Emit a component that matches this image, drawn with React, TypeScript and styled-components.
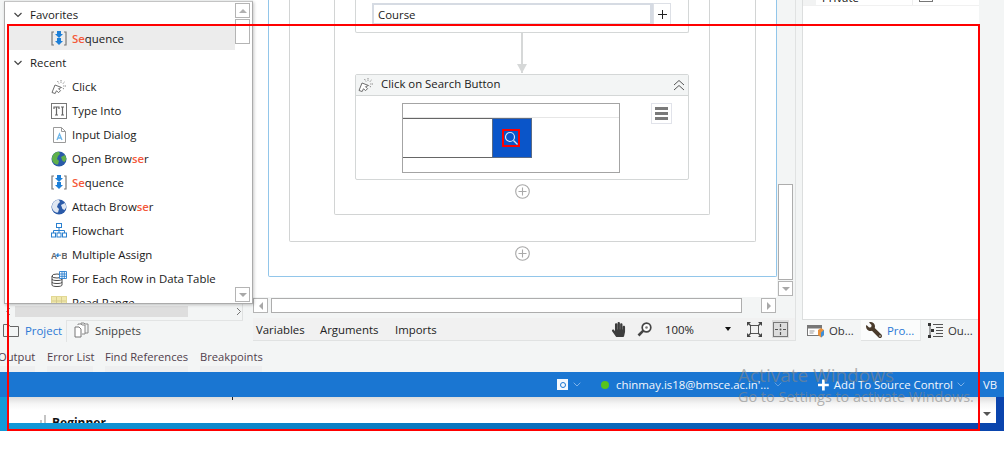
import React from 'react';
import styled, { createGlobalStyle } from 'styled-components';
import { FaHandPaper, FaWrench } from 'react-icons/fa';

const Global = createGlobalStyle`
  html, body { margin: 0; padding: 0; background: #fff; }
  #root { width: 1004px; height: 456px; overflow: hidden; }
  * { box-sizing: border-box; }
`;

const FONT = `"Open Sans", "Noto Sans", sans-serif`;

const Page = styled.div`
  position: relative;
  width: 1004px;
  height: 456px;
  background: #fff;
  overflow: hidden;
  font-family: ${FONT};
  font-size: 11.4px;
  color: #1a1a1a;
`;
const Window = styled.div`
  height: 372px;
  background: #f3f5f5;
  display: flex;
  flex-direction: column;
`;
const Workspace = styled.div`
  height: 341px;
  display: flex;
`;
const LeftColumn = styled.div`
  width: 253px;
  padding-left: 4px;
  display: flex;
  flex-direction: column;
`;
const Popup = styled.div`
  position: relative;
  z-index: 2;
  width: 249px;
  height: 303px;
  margin-top: 1px;
  background: #fff;
  border: 1px solid #ababab;
  border-top-color: #c4c4c4;
  box-shadow: 1px 1px 3px rgba(0, 0, 0, 0.22);
  display: flex;
`;
const TreeList = styled.div`
  width: 230px;
  padding-left: 3px;
  overflow: hidden;
`;
const Row = styled.div<{ $selected?: boolean }>`
  height: 24px;
  display: flex;
  align-items: center;
  background: ${p => (p.$selected ? '#ececec' : 'transparent')};
  white-space: nowrap;
  padding-top: 1px;
`;
const Caret = styled.svg`
  width: 8px;
  height: 6px;
  margin: 0 8px 0 6px;
  flex: none;
`;
const IconSlot = styled.span`
  width: 16px;
  height: 16px;
  margin: 0 5px 0 43px;
  flex: none;
  display: flex;
  align-items: center;
  justify-content: center;
`;
const Hit = styled.b`
  color: #f4593b;
  font-weight: 600;
`;
const ScrollColumn = styled.div`
  width: 16px;
  padding: 1px 0;
  display: flex;
  flex-direction: column;
`;
const ScrollButton = styled.div`
  width: 15px;
  height: 15px;
  flex: none;
  border: 1px solid #b4b4b4;
  background: #fff;
  display: flex;
  align-items: center;
  justify-content: center;
`;
const Tri = styled.span<{ $dir: 'up' | 'down' | 'left' | 'right' }>`
  width: 0;
  height: 0;
  border-style: solid;
  border-color: transparent;
  ${p =>
    p.$dir === 'up'
      ? 'border-width: 0 4px 4px 4px; border-bottom-color: #b0b0b0;'
      : p.$dir === 'down'
      ? 'border-width: 4px 4px 0 4px; border-top-color: #a8a8a8;'
      : p.$dir === 'left'
      ? 'border-width: 4px 4px 4px 0; border-right-color: #a8a8a8;'
      : 'border-width: 4px 0 4px 4px; border-left-color: #a8a8a8;'}
`;
const PopupThumb = styled.div`
  width: 15px;
  height: 25px;
  margin-top: 1px;
  flex: none;
  border: 1px solid #b4b4b4;
`;
const ScrollSpacer = styled.div`
  flex: 1;
`;
const LeftScroll = styled.div`
  width: 239px;
  height: 16px;
  padding: 1px 0 2px 1px;
  border-right: 1px solid #dfe1e1;
  display: flex;
  align-items: center;
  color: #777;
`;
const LeftThumb = styled.div`
  width: 173px;
  height: 11px;
  margin-left: 4px;
  background: #dedede;
`;
const Chev = styled.svg`
  width: 6px;
  height: 9px;
  flex: none;
`;
const Grow = styled.div`
  flex: 1;
`;
const LeftTabs = styled.div`
  height: 21px;
  margin-left: -4px;
  display: flex;
  width: 243px;
  border-top: 1px solid #e2e4e4;
`;
const LeftTab = styled.div<{ $active?: boolean }>`
  display: flex;
  align-items: center;
  gap: 6px;
  height: 21px;
  padding: 0 0 ${p => (p.$active ? 0 : 3)}px ${p => (p.$active ? 3 : 7)}px;
  width: ${p => (p.$active ? '66px' : 'auto')};
  color: ${p => (p.$active ? '#2a78d6' : '#444')};
  background: ${p => (p.$active ? '#f3f5f5' : 'transparent')};
  border-left: ${p => (p.$active ? 'none' : '1px solid #e2e4e4')};
  margin-top: ${p => (p.$active ? -1 : 0)}px;
`;
const Designer = styled.div`
  width: 542px;
  display: flex;
  flex-direction: column;
`;
const DesignerTop = styled.div`
  height: 297px;
  display: flex;
`;
const Canvas = styled.div`
  width: 524px;
  height: 297px;
  background: #fff;
  padding: 0 0 20px 15px;
  display: flex;
  flex-direction: column;
  justify-content: flex-end;
  overflow: hidden;
`;
const Frame = styled.div<{ $w: number; $color: string; $pad: number; $nudge?: number }>`
  width: ${p => p.$w}px;
  flex: none;
  border: 1px solid ${p => p.$color};
  border-top: none;
  border-radius: 0 0 2px 2px;
  padding-bottom: ${p => p.$pad}px;
  margin-right: ${p => p.$nudge ?? 0}px;
  display: flex;
  flex-direction: column;
  align-items: center;
`;
const Card = styled.div`
  width: 334px;
  flex: none;
  background: #fff;
  border: 1px solid #d4d7d7;
  border-radius: 2px;
`;
const CourseCard = styled(Card)`
  border-top: none;
  padding: 20px 0 7px 16px;
  display: flex;
`;
const CourseInput = styled.div`
  width: 281px;
  height: 22px;
  border: 2px solid #d6dbe3;
  border-right-width: 3px;
  padding: 0 4px;
  display: flex;
  align-items: center;
`;
const PlusButton = styled.div`
  width: 18px;
  height: 22px;
  border: 1px solid #dde0e6;
  display: flex;
  align-items: center;
  justify-content: center;
`;
const Connector = styled.div`
  position: relative;
  width: 2px;
  height: 40px;
  flex: none;
  background: #d6d8d8;
  margin-bottom: 1px;
  &::after {
    content: '';
    position: absolute;
    left: -4px;
    bottom: 0;
    border-style: solid;
    border-width: 9px 5px 0 5px;
    border-color: #d6d8d8 transparent transparent transparent;
  }
`;
const CardHeader = styled.div`
  height: 21px;
  background: #f3f5f5;
  border-bottom: 1px solid #d4d7d7;
  display: flex;
  align-items: center;
  padding: 0 3px 0 2px;
  gap: 7px;
`;
const CardTitle = styled.span`
  flex: 1;
  margin-top: -4px;
`;
const CardBody = styled.div`
  padding: 7px 16px 6px 46px;
  display: flex;
  justify-content: space-between;
  align-items: flex-start;
`;
const Shot = styled.div`
  width: 218px;
  height: 70px;
  border: 1px solid #a4a4a4;
  display: flex;
  flex-direction: column;
`;
const ShotTop = styled.div`
  height: 14px;
  border-bottom: 1px solid #e6e6e6;
  flex: none;
`;
const SearchRow = styled.div`
  display: flex;
  height: 40px;
`;
const SearchField = styled.div`
  width: 89px;
  border-top: 1px solid #666;
  border-bottom: 1px solid #666;
  background: #fff;
`;
const SearchButton = styled.div`
  width: 40px;
  background: #0a55c9;
  border: 1px solid #5b6b85;
  display: flex;
  align-items: center;
  justify-content: center;
  padding-right: 3px;
`;
const Target = styled.div`
  width: 18px;
  height: 18px;
  border: 2px solid #ff0000;
  display: flex;
  align-items: center;
  justify-content: center;
`;
const MenuButton = styled.div`
  width: 21px;
  height: 21px;
  border: 1px solid #e1e3ea;
  display: flex;
  flex-direction: column;
  align-items: center;
  justify-content: center;
  gap: 2px;
  & > i {
    display: block;
    width: 13px;
    height: 3px;
    background: #7a7a7a;
  }
`;
const AddCircle = styled.svg<{ $mt: number }>`
  width: 15px;
  height: 15px;
  flex: none;
  margin-top: ${p => p.$mt}px;
`;
const VGutter = styled.div`
  width: 18px;
  height: 297px;
  padding: 184px 0 0 1px;
  display: flex;
  flex-direction: column;
  gap: 1px;
`;
const VThumb = styled.div`
  width: 15px;
  height: 96px;
  background: #fff;
  border: 1px solid #adadad;
`;
const HRow = styled.div`
  height: 21px;
  padding: 1px 0 5px 0;
  display: flex;
  align-items: stretch;
`;
const HThumb = styled.div`
  width: 471px;
  margin-left: 3px;
  background: #fff;
  border: 1px solid #adadad;
`;
const HSpace = styled.div`
  width: 19px;
`;
const DesignerBar = styled.div`
  height: 23px;
  background: #f1f1f1;
  border-bottom: 1px solid #e0e2e2;
  display: flex;
  align-items: center;
  padding-left: 3px;
`;
const BarLink = styled.span<{ $w: number }>`
  width: ${p => p.$w}px;
  color: #222;
`;
const BarIcon = styled.span<{ $w: number; $gray?: boolean; $ml?: number }>`
  width: ${p => p.$w}px;
  height: 18px;
  margin-left: ${p => p.$ml ?? 0}px;
  display: flex;
  align-items: center;
  justify-content: center;
  background: ${p => (p.$gray ? '#dcdcdc' : 'transparent')};
  flex: none;
`;
const ZoomText = styled.span`
  width: 60px;
  margin-left: 12px;
  color: #222;
`;
const ZoomArrow = styled.span`
  width: 0;
  height: 0;
  border-style: solid;
  border-color: #111 transparent transparent transparent;
  border-width: 4px 3.5px 0;
`;
const RightColumn = styled.div`
  width: 185px;
  padding-left: 6px;
  border-left: 1px solid #e0e2e2;
  display: flex;
  flex-direction: column;
`;
const PropsPanel = styled.div`
  height: 320px;
  width: 177px;
  flex: none;
  background: #fff;
  border-left: 1px solid #dcdede;
  border-bottom: 1px solid #dcdede;
  overflow: hidden;
`;
const PropRow = styled.div`
  height: 6px;
  display: flex;
  border-bottom: 1px solid #f1f1f1;
  align-items: flex-end;
`;
const PropGutter = styled.div`
  width: 13px;
  height: 6px;
  background: #f2f3f3;
`;
const PropName = styled.div`
  width: 97px;
  height: 5px;
  border-right: 1px solid #eee;
  position: relative;
  overflow: hidden;
  & > span {
    position: absolute;
    bottom: 0;
    left: 6px;
    color: #111;
  }
`;
const PropCheck = styled.div`
  width: 14px;
  height: 2px;
  margin-left: 6px;
  align-self: flex-start;
  border: 1px solid #777;
  border-top: none;
`;
const RightTabs = styled.div`
  height: 21px;
  display: flex;
  align-items: center;
`;
const RightTab = styled.div<{ $active?: boolean; $w: number; $pl: number }>`
  width: ${p => p.$w}px;
  height: 21px;
  display: flex;
  align-items: center;
  gap: 5px;
  padding-left: ${p => p.$pl}px;
  background: ${p => (p.$active ? '#fbfcfc' : 'transparent')};
  border-bottom: ${p => (p.$active ? '1px solid #e0e2e2' : 'none')};
  border-right: ${p => (p.$active ? '1px solid #e6e8e8' : 'none')};
  color: ${p => (p.$active ? '#2a78d6' : '#333')};
`;
const MirroredWrench = styled(FaWrench)`
  transform: scaleX(-1);
  flex: none;
`;
const OutputTabs = styled.div`
  height: 31px;
  margin-left: -2px;
  padding-top: 9px;
  display: flex;
  gap: 12px;
  align-items: stretch;
`;
const OutputTab = styled.div<{ $w: number }>`
  width: ${p => p.$w}px;
  white-space: nowrap;
  color: #50404c;
  height: 22px;
  font-size: 11.2px;
  line-height: 14px;
  background: linear-gradient(#f3f5f5 0 16px, #eeeff0 16px);
`;
const StatusBar = styled.div`
  height: 25px;
  background: #1a76d2;
  color: #f2f7fd;
  display: flex;
  align-items: center;
  justify-content: flex-end;
`;
const StatusSquare = styled.span`
  width: 11px;
  height: 11px;
  background: #f4f8fd;
  display: flex;
  align-items: center;
  justify-content: center;
  & > i {
    width: 6px;
    height: 6px;
    border: 1.5px solid #1a76d2;
    border-radius: 50%;
  }
`;
const Dot = styled.span`
  width: 8px;
  height: 8px;
  border-radius: 50%;
  background: #58c41c;
  margin: 0 7px 0 20px;
`;
const StatusChevron = styled.svg<{ $ml: number }>`
  width: 8px;
  height: 5px;
  margin-left: ${p => p.$ml}px;
  flex: none;
`;
const Email = styled.span`
  width: 156px;
  white-space: nowrap;
`;
const SourceButton = styled.span`
  display: flex;
  align-items: center;
  gap: 5px;
  margin-left: 36px;
  width: 135px;
  white-space: nowrap;
`;
const UserInitials = styled.span`
  width: 21px;
  margin-left: 18px;
`;
const Desktop = styled.div`
  height: 34px;
  padding: 0 8px 8px;
  background: linear-gradient(90deg, #129ad8 0, #0b7cc0 40%, #0a44ad 100%);
`;
const BackWindow = styled.div`
  height: 26px;
  background: linear-gradient(#dcdcdc 0, #f6f6f6 7px, #fff 13px);
  position: relative;
  display: flex;
  align-items: flex-end;
  overflow: hidden;
  padding-left: 28px;
`;
const BackTitle = styled.span`
  font-weight: 700;
  font-size: 12px;
  line-height: 14px;
  margin-left: 5px;
  margin-bottom: -7px;
  color: #111;
`;
const Bars = styled.svg`
  width: 11px;
  height: 12px;
  margin-bottom: -4px;
`;
const Tick = styled.span`
  position: absolute;
  left: 224px;
  top: 0;
  width: 1px;
  height: 3px;
  background: #222;
`;
const BackArrow = styled.span`
  position: absolute;
  right: 5px;
  top: 15px;
  display: flex;
  width: 0;
  height: 0;
  border-style: solid;
  border-color: #555 transparent transparent transparent;
  border-width: 4px 4px 0;
`;
const RedBox = styled.div`
  position: absolute;
  left: 7px;
  top: 24px;
  width: 973px;
  height: 407px;
  border: 2px solid #ff0000;
  pointer-events: none;
  z-index: 5;
`;
const Watermark = styled.div`
  position: absolute;
  left: 738px;
  top: 362px;
  z-index: 6;
  color: rgba(135, 135, 135, 0.62);
  white-space: nowrap;
`;
const WaterTitle = styled.div`
  font-size: 19px;
  line-height: 26px;
`;
const WaterSub = styled.div`
  font-size: 14.4px;
  line-height: 18px;
`;

const SequenceIcon = () => (
  <svg width="16" height="15" viewBox="0 0 16 15">
    <path d="M3 1H1v13h2M13 1h2v13h-2" fill="none" stroke="#777" strokeWidth="1.2" />
    <path d="M6 0h4v3h2l-4 4-4-4h2zM6 7h4v3h2l-4 4-4-4h2z" fill="#1c7fd8" />
  </svg>
);
const ClickIcon = () => (
  <svg width="16" height="16" viewBox="0 0 16 16">
    <path d="M1 13.500l3-7.500 6.500 2.500-3 1.200 2 2-2 2-2-2-1.300 2.800z" fill="#fff" stroke="#6d6d6d" strokeWidth="1" strokeLinejoin="round" />
    <path d="M10 1v3M13.500 3l-2 2M15 7h-3M6.500 2l1.500 2.500M13 10l-1.500-1" stroke="#8a8a8a" strokeWidth="1" strokeDasharray="1.500 .7" />
  </svg>
);
const TypeIcon = () => (
  <svg width="16" height="16" viewBox="0 0 16 16">
    <rect x=".5" y=".5" width="15" height="15" fill="#fff" stroke="#777" />
    <path d="M3 6V4h5v2M5.500 4v8M4 12h3M10 4h3M11.500 4v8M10 12h3" fill="none" stroke="#666" strokeWidth="1.200" />
  </svg>
);
const DialogIcon = () => (
  <svg width="13" height="16" viewBox="0 0 13 16">
    <path d="M.5.500h8l4 4v11H.5z" fill="#fff" stroke="#9a9a9a" />
    <path d="M8.500.5v4h4" fill="none" stroke="#9a9a9a" />
    <path d="M4 13l2.500-6L9 13M5 11h3" fill="none" stroke="#6cb6ea" strokeWidth="1.300" />
  </svg>
);
const GlobeIcon = ({ land }: { land: string }) => (
  <svg width="16" height="16" viewBox="0 0 16 16">
    <circle cx="8" cy="8" r="7.500" fill="#2a5aa8" />
    <path d="M2 4c2-3 5-3.500 6-3l1 2-2 2-1 3 2 2-1 3.500C4 14 1 11 1 8c0-1.500.4-3 1-4zM10 6l4-2 1.500 4-2 3-2-1z" fill={land} />
  </svg>
);
const FlowIcon = () => (
  <svg width="16" height="15" viewBox="0 0 16 15">
    <g fill="none" stroke="#2a80d0">
      <rect x="5.500" y=".5" width="5" height="4" />
      <rect x=".5" y="10" width="4" height="4" />
      <rect x="6" y="10" width="4" height="4" />
      <rect x="11.500" y="10" width="4" height="4" />
      <path d="M8 4.500V10M2.500 10V7.500h11V10" />
    </g>
  </svg>
);
const AssignIcon = () => (
  <svg width="16" height="10" viewBox="0 0 16 10">
    <text x="0" y="8.500" fontFamily="Liberation Sans" fontSize="8.500" fontWeight="700" fill="#666">A</text>
    <text x="10.500" y="8.500" fontFamily="Liberation Sans" fontSize="8.500" fontWeight="700" fill="#666">B</text>
    <path d="M10 5.200H7v-1.700L5.500 5.200 7 7V5.200" fill="#2a80d0" stroke="#2a80d0" />
  </svg>
);
const TableIcon = () => (
  <svg width="16" height="16" viewBox="0 0 16 16">
    <g fill="none" stroke="#4a4a4a">
      <ellipse cx="6" cy="5" rx="5" ry="2" fill="#fff" />
      <path d="M1 5v9c0 1 2 1.500 5 1.500s5-.5 5-1.500V5M1 8c0 1 2 1.500 5 1.500S11 9 11 8M1 11c0 1 2 1.500 5 1.500s5-.5 5-1.500" />
    </g>
    <path d="M8.500.5h7v7h-7zM8.500 3h7M8.500 5.300h7M11 .5v7M13.300.5v7" fill="#fff" stroke="#2a80d0" strokeWidth=".9" />
  </svg>
);
const RangeIcon = () => (
  <svg width="16" height="14" viewBox="0 0 16 14">
    <rect x=".5" y=".5" width="15" height="13" fill="#f0e8ac" stroke="#e2d894" />
    <path d="M1 5h14M1 9h14M5.500 1v12M10.500 1v12" stroke="#d0c586" strokeWidth=".8" />
  </svg>
);
const CaretDown = () => (
  <Caret viewBox="0 0 8 6">
    <path d="M.5 1L4 4.500 7.500 1" fill="none" stroke="#444" strokeWidth="1.200" />
  </Caret>
);
const PlusCircle = ({ mt }: { mt: number }) => (
  <AddCircle $mt={mt} viewBox="0 0 15 15">
    <circle cx="7.500" cy="7.500" r="6.800" fill="#fff" stroke="#a9a9a9" strokeWidth="1.100" />
    <path d="M7.500 3.500v8M3.500 7.500h8" stroke="#a9a9a9" strokeWidth="1.100" />
  </AddCircle>
);
const SmallChevron = ({ ml, color }: { ml: number; color: string }) => (
  <StatusChevron $ml={ml} viewBox="0 0 8 5">
    <path d="M.7.700L4 4l3.300-3.300" fill="none" stroke={color} />
  </StatusChevron>
);

const items: { icon: React.ReactNode; label: React.ReactNode }[] = [
  { icon: <ClickIcon />, label: 'Click' },
  { icon: <TypeIcon />, label: 'Type Into' },
  { icon: <DialogIcon />, label: 'Input Dialog' },
  { icon: <GlobeIcon land="#5fb04a" />, label: <>Open Brow<Hit>se</Hit>r</> },
  { icon: <SequenceIcon />, label: <><Hit>Se</Hit>quence</> },
  { icon: <GlobeIcon land="#dfe7f2" />, label: <>Attach Brow<Hit>se</Hit>r</> },
  { icon: <FlowIcon />, label: 'Flowchart' },
  { icon: <AssignIcon />, label: 'Multiple Assign' },
  { icon: <TableIcon />, label: 'For Each Row in Data Table' },
  { icon: <RangeIcon />, label: 'Read Range' },
];

export default function App() {
  return (
    <Page>
      <Global />
      <Window>
        <Workspace>
          <LeftColumn>
            <Popup>
              <TreeList>
                <Row><CaretDown />Favorites</Row>
                <Row $selected><IconSlot><SequenceIcon /></IconSlot><span><Hit>Se</Hit>quence</span></Row>
                <Row><CaretDown />Recent</Row>
                {items.map((it, i) => (
                  <Row key={i}><IconSlot>{it.icon}</IconSlot><span>{it.label}</span></Row>
                ))}
              </TreeList>
              <ScrollColumn>
                <ScrollButton><Tri $dir="up" /></ScrollButton>
                <PopupThumb />
                <ScrollSpacer />
                <ScrollButton><Tri $dir="down" /></ScrollButton>
              </ScrollColumn>
            </Popup>
            <LeftScroll>
              <Chev viewBox="0 0 6 9"><path d="M5 1L1.500 4.500 5 8" fill="none" stroke="#888" /></Chev>
              <LeftThumb />
              <Grow />
              <Chev viewBox="0 0 6 9"><path d="M1 1l3.500 3.500L1 8" fill="none" stroke="#777" /></Chev>
            </LeftScroll>
            <LeftTabs>
              <LeftTab $active>
                <svg width="16" height="13" viewBox="0 0 16 13"><path d="M.5 12.500V.5h5l1.500 2h8.500v10z" fill="none" stroke="#666" /></svg>
                Project
              </LeftTab>
              <LeftTab>
                <svg width="15" height="16" viewBox="0 0 15 16">
                  <path d="M7 3V1h3l1 1h3v9h-3" fill="none" stroke="#888" />
                  <path d="M4 3V2h3l1 1h3v9H8" fill="#fff" stroke="#888" />
                  <path d="M1 5h4l2 2v8H1z" fill="#fff" stroke="#777" />
                </svg>
                Snippets
              </LeftTab>
            </LeftTabs>
          </LeftColumn>

          <Designer>
            <DesignerTop>
              <Canvas>
                <Frame $w={509} $color="#92c6ea" $pad={15}>
                  <Frame $w={467} $color="#d2d4d4" $pad={26}>
                    <Frame $w={376} $color="#d2d4d4" $pad={15} $nudge={1}>
                      <CourseCard>
                        <CourseInput>Course</CourseInput>
                        <PlusButton>
                          <svg width="9" height="9" viewBox="0 0 9 9">
                            <path d="M4.500 0v9M0 4.500h9" stroke="#222" />
                          </svg>
                        </PlusButton>
                      </CourseCard>
                      <Connector />
                      <Card>
                        <CardHeader>
                          <ClickIcon />
                          <CardTitle>Click on Search Button</CardTitle>
                          <svg width="12" height="12" viewBox="0 0 12 12">
                            <path d="M1 6l5-4.500L11 6M1 11l5-4.500L11 11" fill="none" stroke="#555" />
                          </svg>
                        </CardHeader>
                        <CardBody>
                          <Shot>
                            <ShotTop />
                            <SearchRow>
                              <SearchField />
                              <SearchButton>
                                <Target>
                                  <svg width="14" height="14" viewBox="0 0 14 14">
                                    <circle cx="6" cy="6" r="4.500" fill="none" stroke="#d4e2f6" strokeWidth="1.200" />
                                    <path d="M9.500 9.500L13.500 13.500" stroke="#d4e2f6" strokeWidth="1.200" />
                                  </svg>
                                </Target>
                              </SearchButton>
                            </SearchRow>
                          </Shot>
                          <MenuButton><i /><i /><i /></MenuButton>
                        </CardBody>
                      </Card>
                      <PlusCircle mt={4} />
                    </Frame>
                  </Frame>
                  <PlusCircle mt={4} />
                </Frame>
              </Canvas>
              <VGutter>
                <VThumb />
                <ScrollButton><Tri $dir="down" /></ScrollButton>
              </VGutter>
            </DesignerTop>
            <HRow>
              <ScrollButton><Tri $dir="left" /></ScrollButton>
              <HThumb />
              <HSpace />
              <ScrollButton><Tri $dir="right" /></ScrollButton>
            </HRow>
            <DesignerBar>
              <BarLink $w={64}>Variables</BarLink>
              <BarLink $w={75}>Arguments</BarLink>
              <BarLink $w={215}>Imports</BarLink>
              <BarIcon $w={16}><FaHandPaper size={15} color="#3c3c3c" /></BarIcon>
              <BarIcon $w={18} $ml={9}>
                <svg width="15" height="15" viewBox="0 0 15 15">
                  <circle cx="9.500" cy="5.500" r="4.300" fill="#fff" stroke="#444" strokeWidth="1.700" />
                  <circle cx="9.500" cy="5.500" r="1.300" fill="#777" />
                  <path d="M6.300 8.700L1.500 13.500" stroke="#444" strokeWidth="2.600" />
                </svg>
              </BarIcon>
              <ZoomText>100%</ZoomText>
              <ZoomArrow />
              <BarIcon $w={16} $ml={15}>
                <svg width="15" height="15" viewBox="0 0 15 15">
                  <rect x="3.500" y="3.500" width="8" height="8" fill="none" stroke="#555" />
                  <path d="M1 1l3 3M14 1l-3 3M1 14l3-3M14 14l-3-3" stroke="#444" strokeWidth="1.200" />
                  <path d="M0 0h4L0 4zM15 0h-4l4 4zM0 15v-4l4 4zM15 15h-4l4-4z" fill="#444" />
                </svg>
              </BarIcon>
              <BarIcon $w={17} $gray $ml={10}>
                <svg width="15" height="15" viewBox="0 0 15 15">
                  <rect x=".5" y=".5" width="14" height="14" fill="none" stroke="#777" />
                  <path d="M7.500 2v3M7.500 10v3M2 7.500h3M10 7.500h3" stroke="#555" strokeWidth="1.200" />
                  <circle cx="7.500" cy="7.500" r="1" fill="#555" />
                </svg>
              </BarIcon>
            </DesignerBar>
          </Designer>

          <RightColumn>
            <PropsPanel>
              <PropRow>
                <PropGutter />
                <PropName><span>Private</span></PropName>
                <PropCheck />
              </PropRow>
            </PropsPanel>
            <RightTabs>
              <RightTab $w={59} $pl={5}>
                <svg width="17" height="14" viewBox="0 0 17 14">
                  <rect x=".5" y="1.500" width="14" height="10" fill="#fff" stroke="#777" />
                  <rect x="1" y="2" width="13" height="2.500" fill="#777" />
                  <path d="M2.500 7h5M2.500 9h4" stroke="#999" />
                  <path d="M11 6l3-2 3 2v5l-3 2.500L11 11z" fill="#e8913c" />
                  <path d="M14 8.500V13.500l3-2.500V6z" fill="#3f8fd8" />
                </svg>
                Ob...
              </RightTab>
              <RightTab $active $w={60} $pl={5}>
                <MirroredWrench size={16} color="#4a3b2c" />
                Pro...
              </RightTab>
              <RightTab $w={58} $pl={6}>
                <svg width="16" height="15" viewBox="0 0 16 15">
                  <path d="M1 0h3v3H1zM4 6h3v3H4zM1 12h3v3H1z" fill="#333" />
                  <path d="M6 1.500h10M9 4.500h7M9 7.500h7M9 10.500h7M6 13.500h10M3 3v9" stroke="#555" />
                </svg>
                Ou...
              </RightTab>
            </RightTabs>
          </RightColumn>
        </Workspace>
        <OutputTabs>
          <OutputTab $w={37}>Output</OutputTab>
          <OutputTab $w={46}>Error List</OutputTab>
          <OutputTab $w={83}>Find References</OutputTab>
          <OutputTab $w={62}>Breakpoints</OutputTab>
        </OutputTabs>
      </Window>
      <StatusBar>
        <StatusSquare><i /></StatusSquare>
        <SmallChevron ml={5} color="#7fb2e8" />
        <Dot />
        <Email>chinmay.is18@bmsce.ac.in'...</Email>
        <SmallChevron ml={2} color="#5f9ee0" />
        <SourceButton>
          <svg width="12" height="12" viewBox="0 0 12 12"><path d="M4.500 0h3v4.500H12v3H7.500V12h-3V7.500H0v-3h4.500z" fill="#fff" /></svg>
          Add To Source Control
        </SourceButton>
        <SmallChevron ml={4} color="#7fb2e8" />
        <UserInitials>VB</UserInitials>
      </StatusBar>
      <Desktop>
        <BackWindow>
          <Tick />
          <Bars viewBox="0 0 11 12">
            <path d="M0 9h2v3H0zM4 5h2v7H4zM8 0h2v12H8z" fill="#c4c4c4" />
          </Bars>
          <BackTitle>Beginner</BackTitle>
          <BackArrow />
        </BackWindow>
      </Desktop>
      <Watermark>
        <WaterTitle>Activate Windows</WaterTitle>
        <WaterSub>Go to Settings to activate Windows.</WaterSub>
      </Watermark>
      <RedBox />
    </Page>
  );
}
